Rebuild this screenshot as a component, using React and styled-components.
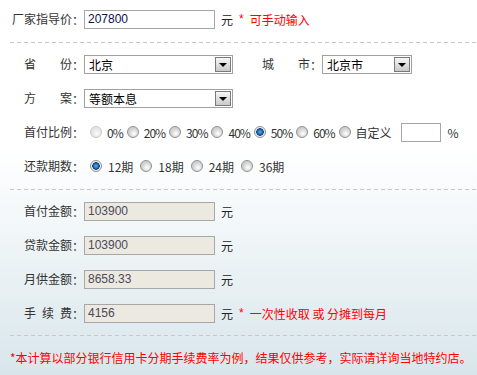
import React from 'react'
import styled, { createGlobalStyle } from 'styled-components'

const GlobalStyle = createGlobalStyle`
  html, body {
    margin: 0;
    padding: 0;
  }
  body {
    min-height: 375px;
    background: linear-gradient(to bottom, #fff 0, #fff 150px, #d8e6eb 375px);
    font-family: "Noto Sans CJK SC", "Liberation Sans", sans-serif;
    font-size: 12px;
    color: #333;
  }
`

const Page = styled.div`
  width: 477px;
`

const Section = styled.div`
  padding: ${props => props.$pad || '0'};
`

const Row = styled.div`
  display: flex;
  align-items: center;
  height: 34px;
  white-space: nowrap;
`

const Divider = styled.div`
  height: 1px;
  margin: ${props => props.$m || '0'} 0 0 10px;
  background: repeating-linear-gradient(90deg, #c8c8c8 0 4px, transparent 4px 7px);
`

const LabelBox = styled.div`
  display: flex;
  align-items: center;
  margin-left: ${props => props.$left}px;
  flex-shrink: 0;
`

const LabelChars = styled.div`
  display: flex;
  justify-content: space-between;
  width: ${props => props.$w}px;
  line-height: 14px;
`

const Colon = styled.span`
  width: 12px;
`

const Label = ({ text, width = 48, left = 24 }) => (
  <LabelBox $left={left}>
    <LabelChars $w={width}>
      {text.split('').map((c, i) => <span key={i}>{c}</span>)}
    </LabelChars>
    <Colon>：</Colon>
  </LabelBox>
)

const TextBox = styled.div`
  box-sizing: border-box;
  width: ${props => props.$w || 131}px;
  height: 19px;
  border: 1px solid #a7a7a7;
  background: ${props => (props.$readonly ? '#ece9e1' : '#fff')};
  color: ${props => (props.$readonly ? '#4a4a5a' : '#10104a')};
  font-family: "Liberation Sans", Arial, sans-serif;
  font-size: 12px;
  line-height: 17px;
  padding-left: 3px;
  flex-shrink: 0;
`

const Unit = styled.span`
  margin-left: 6px;
  color: #222;
`

const Note = styled.span`
  margin-left: 6px;
  color: #f00;
  display: flex;
  align-items: center;
`

const Star = styled.span`
  margin-right: 6px;
  font-family: "Liberation Sans", sans-serif;
`

const SelectBox = styled.div`
  box-sizing: border-box;
  position: relative;
  width: ${props => props.$w}px;
  height: 19px;
  border: 1px solid #a0a0a0;
  background: #fff;
  color: #000;
  padding-left: 4px;
  line-height: 17px;
  flex-shrink: 0;
`

const Arrow = styled.span`
  position: absolute;
  right: 1px;
  top: 1px;
  box-sizing: border-box;
  width: 16px;
  height: 15px;
  border: 1px solid #7a7a7a;
  background: linear-gradient(#f6f6f6, #c9c9c9);
  &::after {
    content: '';
    position: absolute;
    left: 3px;
    top: 5px;
    border-left: 4px solid transparent;
    border-right: 4px solid transparent;
    border-top: 4px solid #000;
  }
`

const Select = ({ value, width }) => (
  <SelectBox $w={width}>
    {value}
    <Arrow />
  </SelectBox>
)

const Radios = styled.div`
  display: flex;
  align-items: center;
  margin-left: 6px;
`

const Option = styled.div`
  display: flex;
  align-items: center;
  margin-right: ${props => (props.$tight ? 4 : 7)}px;
  color: #333;
`

const OptionText = styled.span`
  letter-spacing: ${props => (props.$tight ? '-1px' : '0')};
`

const Dot = styled.span`
  box-sizing: border-box;
  width: 12px;
  height: 12px;
  border-radius: 50%;
  margin-right: ${props => (props.$tight ? 5 : 6)}px;
  border: 1px solid ${props => (props.$off ? '#c8c8c8' : '#8e8f8f')};
  background: ${props =>
    props.$checked
      ? 'radial-gradient(circle, #5fb2ee 0, #1767b0 2.5px, #0b3f7a 3.5px, #e8e8e8 4px, #fff 6px)'
      : props.$off
        ? 'radial-gradient(circle at 60% 65%, #fafafa 0, #e4e4e4 5px)'
        : 'radial-gradient(circle at 60% 65%, #fff 0, #d0d0d0 5px)'};
`

const Radio = ({ label, checked, off, tight }) => (
  <Option $tight={tight}>
    <Dot $checked={checked} $off={off} $tight={tight} />
    <OptionText $tight={tight && /%/.test(label)}>{label}</OptionText>
  </Option>
)

const Small = styled.div`
  box-sizing: border-box;
  width: 40px;
  height: 19px;
  border: 1px solid #a7a7a7;
  background: #fff;
  margin-left: 5px;
  flex-shrink: 0;
`

const Pct = styled.span`
  margin-left: 7px;
`

const Footer = styled.div`
  display: flex;
  align-items: center;
  height: 34px;
  margin-top: 4px;
  padding-left: 10px;
  color: #f00;
  white-space: nowrap;
`

const ratios = ['0%', '20%', '30%', '40%', '50%', '60%', '自定义']
const terms = ['12期', '18期', '24期', '36期']

export default function App() {
  return (
    <Page>
      <GlobalStyle />
      <Section $pad="2px 0 0">
        <Row>
          <Label text="厂家指导价" width={60} left={12} />
          <TextBox>207800</TextBox>
          <Unit>元</Unit>
          <Note>
            <Star>*</Star>可手动输入
          </Note>
        </Row>
      </Section>
      <Divider $m="6px" />
      <Section $pad="4px 0 0">
        <Row>
          <Label text="省份" />
          <Select value="北京" width={149} />
          <Label text="城市" left={29} />
          <Select value="北京市" width={90} />
        </Row>
        <Row>
          <Label text="方案" />
          <Select value="等额本息" width={149} />
        </Row>
        <Row>
          <Label text="首付比例" />
          <Radios>
            {ratios.map(r => (
              <Radio key={r} label={r} tight checked={r === '50%'} off={r === '0%'} />
            ))}
          </Radios>
          <Small />
          <Pct>%</Pct>
        </Row>
        <Row>
          <Label text="还款期数" />
          <Radios>
            {terms.map(t => (
              <Radio key={t} label={t} checked={t === '12期'} />
            ))}
          </Radios>
        </Row>
      </Section>
      <Divider $m="6px" />
      <Section $pad="4px 0 0">
        <Row>
          <Label text="首付金额" />
          <TextBox $readonly>103900</TextBox>
          <Unit>元</Unit>
        </Row>
        <Row>
          <Label text="贷款金额" />
          <TextBox $readonly>103900</TextBox>
          <Unit>元</Unit>
        </Row>
        <Row>
          <Label text="月供金额" />
          <TextBox $readonly>8658.33</TextBox>
          <Unit>元</Unit>
        </Row>
        <Row>
          <Label text="手续费" />
          <TextBox $readonly>4156</TextBox>
          <Unit>元</Unit>
          <Note>
            <Star>*</Star>一次性收取 或 分摊到每月
          </Note>
        </Row>
      </Section>
      <Divider $m="5px" />
      <Footer>*本计算以部分银行信用卡分期手续费率为例，结果仅供参考，实际请详询当地特约店。</Footer>
    </Page>
  )
}
